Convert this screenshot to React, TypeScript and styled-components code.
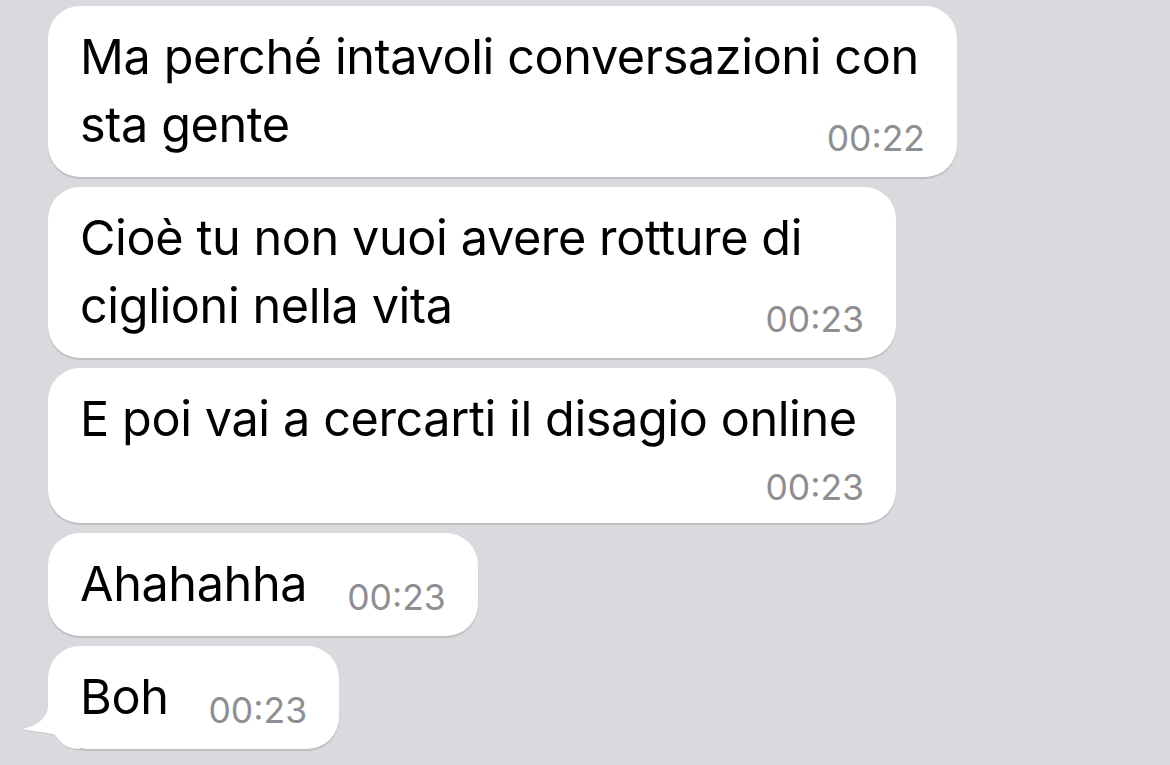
import React from 'react'
import styled, { createGlobalStyle } from 'styled-components'

const GlobalStyle = createGlobalStyle`
  html, body {
    margin: 0;
    padding: 0;
    background: #dadade;
  }
  body {
    font-family: Inter, "Noto Sans", "Liberation Sans", sans-serif;
    -webkit-font-smoothing: antialiased;
  }
`

const Chat = styled.div`
  box-sizing: border-box;
  width: 1170px;
  height: 765px;
  overflow: hidden;
  background: #dadade;
  padding: 6px 0 0 48px;
  display: flex;
  flex-direction: column;
  align-items: flex-start;
  gap: 10px;
`

const Bubble = styled.div<{ $width?: number; $tail?: boolean }>`
  position: relative;
  display: flow-root;
  box-sizing: border-box;
  width: ${({ $width }) => ($width ? `${$width}px` : 'auto')};
  padding: 17px 32px 18px 32px;
  background: #ffffff;
  border-radius: 32px;
  border-bottom-left-radius: ${({ $tail }) => ($tail ? '40px' : '32px')};
  box-shadow: 0 1.5px 1px rgba(0, 0, 0, 0.13);
`

const Text = styled.span`
  font-size: 48.6px;
  line-height: 68px;
  letter-spacing: -0.4px;
  color: #000;
`

const Time = styled.span<{ $drop: number }>`
  float: right;
  margin: ${({ $drop }) => `${$drop}px 0 0 40px`};
  font-size: 35.5px;
  line-height: 34px;
  color: #8e8e93;
`

const Tail = styled.svg`
  position: absolute;
  left: -28px;
  bottom: 0;
  width: 60px;
  height: 60px;
  filter: drop-shadow(0 1.5px 0.5px rgba(0, 0, 0, 0.1));
`

type Message = { text: string; time: string; width?: number; drop?: number; tail?: boolean }

const messages: Message[] = [
  { text: 'Ma perché intavoli conversazioni con sta gente', time: '00:22', width: 909 },
  { text: 'Cioè tu non vuoi avere rotture di ciglioni nella vita', time: '00:23', width: 848 },
  { text: 'E poi vai a cercarti il disagio online', time: '00:23', width: 848, drop: 18 },
  { text: 'Ahahahha', time: '00:23' },
  { text: 'Boh', time: '00:23', tail: true },
]

function BubbleTail() {
  return (
    <Tail viewBox="0 0 60 60">
      <path
        d="M28 0 L28 16 C28 30 16 37 2 40 C14 43 28 43 35 46 C40 53 46 60 60 60 L60 0 Z"
        fill="#ffffff"
      />
    </Tail>
  )
}

export default function App() {
  return (
    <>
      <GlobalStyle />
      <Chat>
        {messages.map((m, i) => (
          <Bubble key={i} $width={m.width} $tail={m.tail}>
            {m.tail && <BubbleTail />}
            <Text>{m.text}</Text>
            <Time $drop={m.drop ?? 31}>{m.time}</Time>
          </Bubble>
        ))}
      </Chat>
    </>
  )
}
